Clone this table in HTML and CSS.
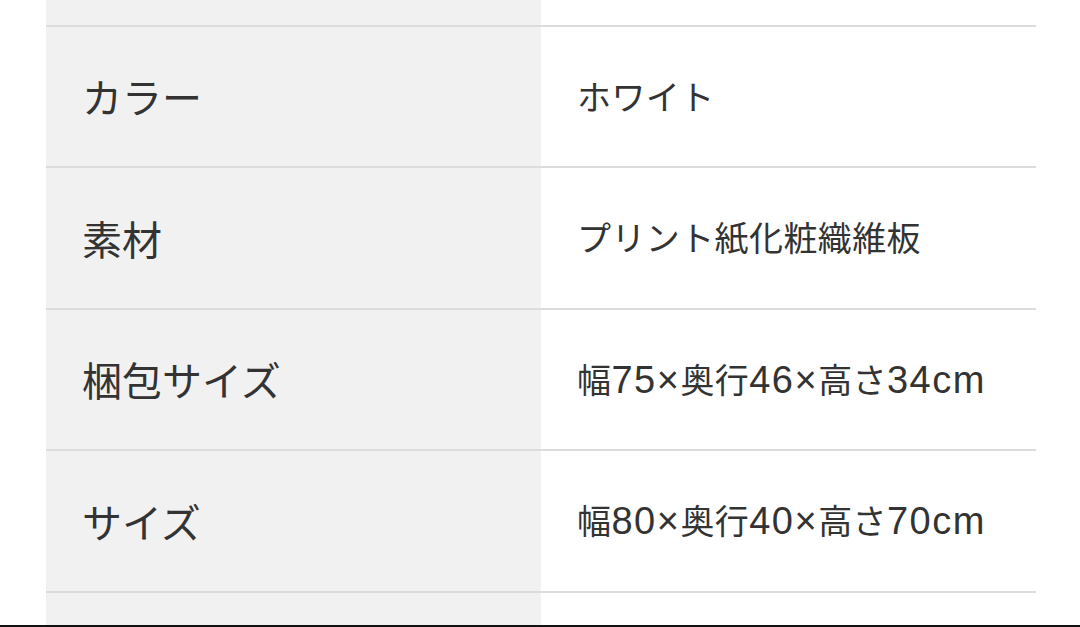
FILE: index.html
```html
<!DOCTYPE html>
<html lang="ja">
<head>
<meta charset="utf-8">
<link rel="stylesheet" href="styles.css">
</head>
<body>
<div class="page">
  <table class="spec">
    <tbody>
      <tr><th></th><td></td></tr>
      <tr><th>カラー</th><td>ホワイト</td></tr>
      <tr><th>素材</th><td>プリント紙化粧織維板</td></tr>
      <tr><th>梱包サイズ</th><td>幅<span class="num">75×</span>奥行<span class="num">46×</span>高さ<span class="num">34cm</span></td></tr>
      <tr><th>サイズ</th><td>幅<span class="num">80×</span>奥行<span class="num">40×</span>高さ<span class="num">70cm</span></td></tr>
      <tr><th></th><td></td></tr>
    </tbody>
  </table>
  <div class="edge"></div>
</div>
</body>
</html>
```

FILE: styles.css
```css
html, body {
  margin: 0;
  padding: 0;
  background: #ffffff;
}
.page {
  position: relative;
  width: 1080px;
  height: 627px;
  overflow: hidden;
  font-family: "Noto Sans CJK JP", "Noto Sans", sans-serif;
  color: #333333;
}
.spec {
  margin: -116px 0 0 46px;
  width: 990px;
  border-collapse: collapse;
  table-layout: fixed;
}
.spec tr {
  height: 141.5px;
  border-bottom: 2px solid #dcdcdc;
}
.spec th,
.spec td {
  padding: 0 0 0 36px;
  text-align: left;
  vertical-align: middle;
  white-space: nowrap;
  font-weight: 400;
  line-height: 1.2;
}
.spec th {
  width: 459px;
  background: #f1f1f1;
  font-size: 40px;
  color: #333333;
}
.spec td {
  background: #ffffff;
  font-size: 34px;
  letter-spacing: 0.4px;
}
.num {
  font-family: "Liberation Sans", "Noto Sans", sans-serif;
  font-size: 38px;
  letter-spacing: 1.5px;
  line-height: 1;
}
.edge {
  position: absolute;
  left: 0;
  right: 0;
  bottom: 0;
  height: 2px;
  background: #111111;
}
```
